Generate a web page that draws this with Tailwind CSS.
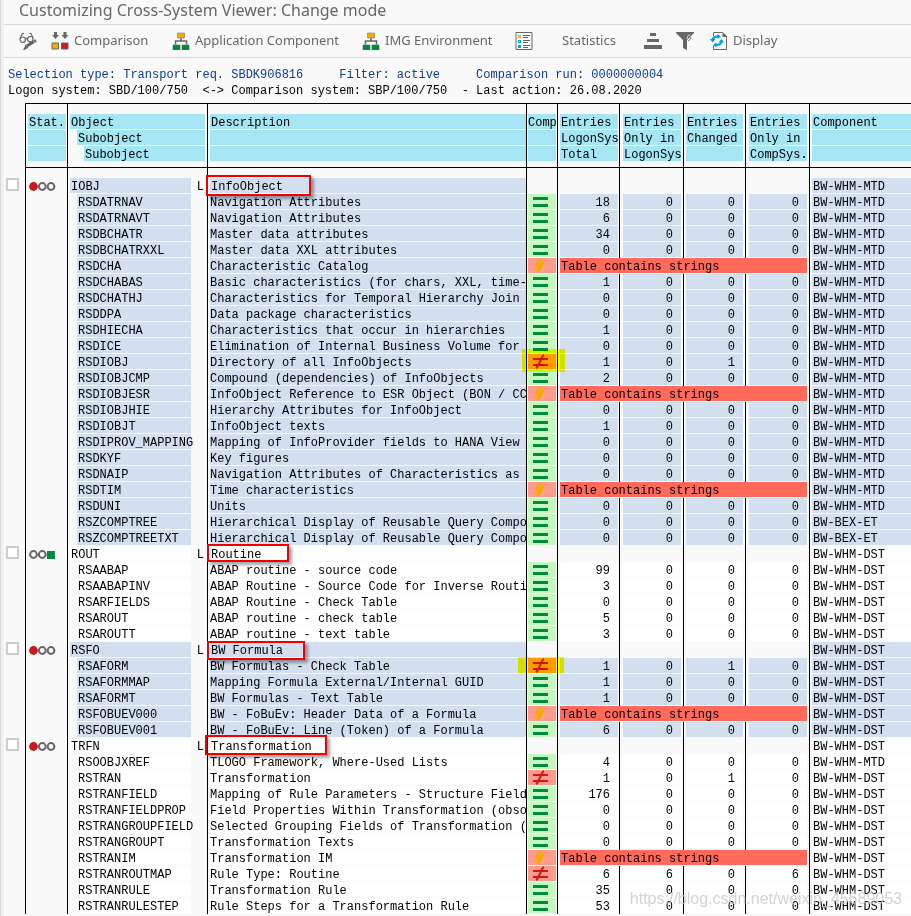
<!DOCTYPE html>
<html lang="en">
<head>
    <meta charset="UTF-8">
    <meta name="viewport" content="width=device-width, initial-scale=1.0">
    <title>Customizing Cross-System Viewer</title>
    <script src="https://cdn.jsdelivr.net/npm/@tailwindcss/browser@4"></script>
</head>
<body class="bg-[#f9f9f9] overflow-hidden">
    <svg class="hidden">
        <symbol id="tree" viewBox="0 0 18 18">
            <path d="M9 6v3M3.500 12.500v-3.500h11v3.500" fill="none" stroke="#666" stroke-width="1.500"/>
            <path d="M5.500 1h7v5h-7z" fill="#f0ab00" stroke="#8a7a4a" stroke-width=".6"/>
            <path d="M1 13h7v5H1zM10 13h7v5h-7z" fill="#008c3c" stroke="#456b52" stroke-width=".6"/>
        </symbol>
        <symbol id="equal" viewBox="0 0 15 15">
            <path d="M0 3h15v3H0zM0 10h15v3H0z" fill="#008c3c"/>
        </symbol>
        <symbol id="differ" viewBox="0 0 15 15">
            <path d="M0 5h15M0 11h15M3 14c3-1 5-12 8-13" fill="none" stroke="#cc1919" stroke-width="2"/>
        </symbol>
        <symbol id="flash" viewBox="0 0 15 15">
            <path d="M5.500 1.500h3.500L6.500 6H8V3.500h2.500V8L6 13.500H2.500L5 9H1.500z" fill="#f0ab00"/>
        </symbol>
        <symbol id="red" viewBox="0 0 27 15">
            <circle cx="4.500" cy="8.500" r="4.400" fill="#cc1919"/>
            <circle cx="13.300" cy="8.500" r="3.400" fill="none" stroke="#666" stroke-width="2"/>
            <circle cx="22" cy="8.500" r="3.400" fill="none" stroke="#666" stroke-width="2"/>
        </symbol>
        <symbol id="green" viewBox="0 0 27 15">
            <circle cx="4.500" cy="8.500" r="3.400" fill="none" stroke="#666" stroke-width="2"/>
            <circle cx="13.300" cy="8.500" r="3.400" fill="none" stroke="#666" stroke-width="2"/>
            <path d="M18 5h8v8h-8z" fill="#008c3c"/>
        </symbol>
    </svg>

    <div class="border-l border-[#d8d8d8]">
    <div class="border-l-3 border-[#f0f0f0]">
        <h1 class="h-[25px] pl-[15px] border-b border-[#d9d9d9] text-[16px] leading-[20px] text-[#666] font-['Noto_Sans',sans-serif] whitespace-nowrap">Customizing Cross-System Viewer: Change mode</h1>

        <div class="h-[33px] pl-[15px] flex items-center border-b border-[#d9d9d9] text-[13px] text-[#666] font-['Noto_Sans',sans-serif] whitespace-nowrap">
            <button aria-label="Display / Change" class="mr-[14px]">
                <svg class="w-[18px] h-[18px]" viewBox="0 0 18 18" fill="none" stroke="#666" stroke-width="1.200">
                    <path d="M1 6.500L3.500 1.500h1.500M14 6L12 1.500h-1.500M6.500 7q1-1 2 0"/>
                    <circle cx="3.700" cy="7.700" r="2.700"/><circle cx="11.300" cy="7.200" r="2.700"/>
                    <path d="M5 17.500l2-4 1.500 2z" fill="#666"/><path d="M8 14l7-4.500" stroke-width="3.200"/><path d="M15.500 9.500l1.500-1" stroke-width="3"/>
                </svg>
            </button>
            <button class="w-[97px] mr-[24px] flex items-center gap-[5px]">
                <svg class="w-[18px] h-[18px] shrink-0" viewBox="0 0 18 18">
                    <path d="M3 0h3v3h2L4.500 7 1 3h2zM12.500 0h3v3h2L14 7l-3.500-4h2z" fill="#666"/>
                    <path d="M1 11h6.500v6H1z" fill="#f0ab00" stroke="#666"/><path d="M10.500 11H17v6h-6.500z" fill="#cc1919" stroke="#666"/>
                </svg>
                Comparison
            </button>
            <button class="w-[166px] mr-[24px] flex items-center gap-[5px]">
                <svg class="w-[18px] h-[18px] shrink-0"><use href="#tree"/></svg>
                Application Component
            </button>
            <button class="w-[130px] mr-[23px] flex items-center gap-[5px]">
                <svg class="w-[18px] h-[18px] shrink-0"><use href="#tree"/></svg>
                IMG Environment
            </button>
            <button aria-label="Legend" class="mr-[29px]">
                <svg class="w-[18px] h-[18px]" viewBox="0 0 18 18">
                    <path d="M1 .5h16v17H1z" fill="#f9f9f9" stroke="#666"/>
                    <path d="M3 3l3 3M6 3L3 6" stroke="#f0ab00" stroke-width="1.200"/>
                    <path d="M3.500 8.500h2v2h-2z" fill="none" stroke="#009de0" stroke-width="1.200"/><path d="M3 13h3v3H3z" fill="#009de0"/>
                    <path d="M8 3.500h7M8 5.500h5M8 8.500h7M8 10.500h5M8 13.500h7M8 15.500h5" stroke="#666"/>
                </svg>
            </button>
            <button class="w-[54px] mr-[28px]">Statistics</button>
            <button aria-label="Sort" class="mr-[14px]">
                <svg class="w-[18px] h-[18px]" viewBox="0 0 18 18" fill="#666"><path d="M6 1h6v3H6zM3 7h12v3H3zM0 13h18v4H0z"/></svg>
            </button>
            <button aria-label="Filter" class="mr-[16px]">
                <svg class="w-[18px] h-[18px]" viewBox="0 0 18 18"><path d="M0 0h18v1l-7 7v10l-4-2V8L0 1z" fill="#666"/><path d="M11 7q0-4 3.500-4.500" fill="none" stroke="#ddd"/><path d="M12 9q3-1 3-4" fill="none" stroke="#777"/></svg>
            </button>
            <button class="flex items-center gap-[5px]">
                <svg class="w-[18px] h-[18px] shrink-0" viewBox="0 0 18 18" fill="none">
                    <path d="M3.500 4V.5h9l4 4v13h-13V14" stroke="#666"/><path d="M12.500 0v5h5z" fill="#666"/>
                    <path d="M2.500 9q0-5 6-4.500M11.500 8.500q0 5-6 4.500" stroke="#009de0" stroke-width="2"/>
                    <path d="M0 7h5.500L2.700 10.500zM8.500 10.500h5.500L11.500 7zM7.500 2l3.500 2.500L7.500 7zM6.500 10.500v5L3 13z" fill="#009de0"/>
                </svg>
                Display
            </button>
        </div>

        <div class="pt-[9px] pl-1 h-[45px] text-[12px] leading-[16px] font-['Liberation_Mono',monospace] text-black">
            <p class="whitespace-pre text-[#0b3d91]">Selection type: Transport req. SBDK906816     Filter: active     Comparison run: 0000000004</p>
            <p class="whitespace-pre">Logon system: SBD/100/750  &lt;-&gt; Comparison system: SBP/100/750  - Last action: 26.08.2020</p>
        </div>
    </div>
    </div>

    <div class="relative border-l border-[#d8d8d8]">
    <div class="border-l-3 border-[#f0f0f0] pb-[3px]">
        <table class="w-full table-fixed border-separate border-spacing-0 text-[12px] leading-[18px] font-['Liberation_Mono',monospace] whitespace-nowrap text-black">
            <colgroup>
                <col class="w-[21px]"><col class="w-[42px]"><col class="w-[140px]"><col class="w-[319px]"><col class="w-[31px]">
                <col class="w-[62px]"><col class="w-[64px]"><col class="w-[62px]"><col class="w-[64px]"><col>
            </colgroup>
            <thead><tr id="head"></tr></thead>
            <tbody id="rows"></tbody>
        </table>
    </div>
    <div class="absolute right-[9px] bottom-[8px] text-[16px] leading-[20px] text-[#c8c8c8]/80 font-['Liberation_Sans',sans-serif] whitespace-nowrap">https://blog.csdn.net/weixin_45689053</div>
    </div>

    <script>
        const heads = [
            ["Stat.", "", ""], ["Object", "Subobject", "Subobject"], ["Description", "", ""], ["Comp", "", ""],
            ["Entries", "LogonSys", "Total"], ["Entries", "Only in", "LogonSys"], ["Entries", "Changed", ""],
            ["Entries", "Only in", "CompSys."], ["Component", "", ""]
        ];
        // padding between the column line and the coloured field
        const pads = ["pl-[2px] pr-px", "pl-[2px] pr-[2px]", "pl-[2px] pr-0", "pl-px pr-px", "pl-[2px] pr-px",
            "pl-[3px] pr-[2px]", "pl-[2px] pr-[2px]", "pl-[3px] pr-[2px]", "pl-[2px]"];
        const line = "border-l border-black";

        // sub rows: name, description, entries ("s" = contains strings), component, highlight
        const M = "BW-WHM-MTD", D = "BW-WHM-DST", B = "BW-BEX-ET";
        const groups = [
            { name: "IOBJ", stat: "red", text: "InfoObject", comp: M, bg: "bg-[#d3dfef]", frame: "-left-[2px] -top-[3px] w-[105px] h-[21px]", subs: [
                ["RSDATRNAV", "Navigation Attributes", [18, 0, 0, 0], M],
                ["RSDATRNAVT", "Navigation Attributes", [6, 0, 0, 0], M],
                ["RSDBCHATR", "Master data attributes", [34, 0, 0, 0], M],
                ["RSDBCHATRXXL", "Master data XXL attributes", [0, 0, 0, 0], M],
                ["RSDCHA", "Characteristic Catalog", "s", M],
                ["RSDCHABAS", "Basic characteristics (for chars, XXL, time-", [1, 0, 0, 0], M],
                ["RSDCHATHJ", "Characteristics for Temporal Hierarchy Join", [0, 0, 0, 0], M],
                ["RSDDPA", "Data package characteristics", [0, 0, 0, 0], M],
                ["RSDHIECHA", "Characteristics that occur in hierarchies", [1, 0, 0, 0], M],
                ["RSDICE", "Elimination of Internal Business Volume for", [0, 0, 0, 0], M],
                ["RSDIOBJ", "Directory of all InfoObjects", [1, 0, 1, 0], M, "-left-[5px] -top-[5px] w-[43px] h-[23px]"],
                ["RSDIOBJCMP", "Compound (dependencies) of InfoObjects", [2, 0, 0, 0], M],
                ["RSDIOBJESR", "InfoObject Reference to ESR Object (BON / CC", "s", M],
                ["RSDIOBJHIE", "Hierarchy Attributes for InfoObject", [0, 0, 0, 0], M],
                ["RSDIOBJT", "InfoObject texts", [1, 0, 0, 0], M],
                ["RSDIPROV_MAPPING", "Mapping of InfoProvider fields to HANA View", [0, 0, 0, 0], M],
                ["RSDKYF", "Key figures", [0, 0, 0, 0], M],
                ["RSDNAIP", "Navigation Attributes of Characteristics as", [0, 0, 0, 0], M],
                ["RSDTIM", "Time characteristics", "s", M],
                ["RSDUNI", "Units", [0, 0, 0, 0], M],
                ["RSZCOMPTREE", "Hierarchical Display of Reusable Query Compo", [0, 0, 0, 0], B],
                ["RSZCOMPTREETXT", "Hierarchical Display of Reusable Query Compo", [0, 0, 0, 0], B]
            ] },
            { name: "ROUT", stat: "green", text: "Routine", comp: D, bg: "bg-white", frame: "-left-px -top-[2px] w-[82px] h-[18px]", subs: [
                ["RSAABAP", "ABAP routine - source code", [99, 0, 0, 0], D],
                ["RSAABAPINV", "ABAP Routine - Source Code for Inverse Routi", [3, 0, 0, 0], D],
                ["RSARFIELDS", "ABAP Routine - Check Table", [0, 0, 0, 0], D],
                ["RSAROUT", "ABAP routine - check table", [5, 0, 0, 0], D],
                ["RSAROUTT", "ABAP routine - text table", [3, 0, 0, 0], D]
            ] },
            { name: "RSFO", stat: "red", text: "BW Formula", comp: D, bg: "bg-[#d3dfef]", frame: "-left-px -top-px w-[98px] h-[19px]", subs: [
                ["RSAFORM", "BW Formulas - Check Table", [1, 0, 1, 0], D, "-left-[9px] -top-px w-[46px] h-[16px]"],
                ["RSAFORMMAP", "Mapping Formula External/Internal GUID", [1, 0, 0, 0], D],
                ["RSAFORMT", "BW Formulas - Text Table", [1, 0, 0, 0], D],
                ["RSFOBUEV000", "BW - FoBuEv: Header Data of a Formula", "s", D],
                ["RSFOBUEV001", "BW - FoBuEv: Line (Token) of a Formula", [6, 0, 0, 0], D]
            ] },
            { name: "TRFN", stat: "red", text: "Transformation", comp: D, bg: "bg-white", frame: "-left-[3px] -top-[3px] w-[122px] h-[20px]", subs: [
                ["RSOOBJXREF", "TLOGO Framework, Where-Used Lists", [4, 0, 0, 0], M],
                ["RSTRAN", "Transformation", [1, 0, 1, 0], D],
                ["RSTRANFIELD", "Mapping of Rule Parameters - Structure Field", [176, 0, 0, 0], D],
                ["RSTRANFIELDPROP", "Field Properties Within Transformation (obso", [0, 0, 0, 0], D],
                ["RSTRANGROUPFIELD", "Selected Grouping Fields of Transformation (", [0, 0, 0, 0], D],
                ["RSTRANGROUPT", "Transformation Texts", [0, 0, 0, 0], D],
                ["RSTRANIM", "Transformation IM", "s", D],
                ["RSTRANROUTMAP", "Rule Type: Routine", [6, 6, 0, 6], D],
                ["RSTRANRULE", "Transformation Rule", [35, 0, 0, 0], D],
                ["RSTRANRULESTEP", "Rule Steps for a Transformation Rule", [53, 0, 0, 0], D]
            ] }
        ];

        document.getElementById("head").innerHTML = `<td></td>` + heads.map((h, i) =>
            `<th class="${line} border-t border-b font-normal text-left align-top pt-[10px] pb-[5px] ${pads[i]}">` +
            h.map((t, n) => `<div class="h-[15px] mb-px bg-[#a6e6f4] ${i == 1 ? ["pl-px", "pl-px ml-[7px]", "pl-px ml-[14px]"][n] : i == 3 ? "" : "pl-px"}">${t}</div>`).join("") +
            `</th>`).join("");

        function field(i, bg, html, extra = "pl-px") {
            return `<td class="${line} p-0 ${pads[i]}"><div class="h-[15px] mb-px ${bg} ${extra}">${html}</div></td>`;
        }

        function objectRow(g) {
            return `<tr>
                <td class="p-0 pl-[2px]"><input type="checkbox" aria-label="${g.name}" class="block appearance-none w-[13px] h-[13px] mb-[3px] border-2 border-[#ccc] bg-white"></td>
                <td class="${line} p-0 pl-[3px]"><svg class="block w-[27px] h-[15px] mb-px" role="img" aria-label="${g.stat}"><use href="#${g.stat}"/></svg></td>
                <td class="${line} p-0 pl-[2px] pr-[3px]"><div class="flex justify-between h-[15px] mb-px"><span class="w-[121px] pl-px ${g.bg}">${g.name}</span><span>L</span></div></td>
                <td class="${line} p-0 ${pads[2]} relative"><div class="h-[15px] mb-px pl-px ${g.bg}">${g.text}</div>
                    <div class="absolute z-10 border-2 border-[#f00000] shadow-[3px_3px_3px_rgba(0,0,0,0.35)] ${g.frame}"></div></td>
                ${`<td class="${line} p-0"></td>`.repeat(5)}
                ${field(8, g.bg, g.comp)}</tr>`;
        }

        function subRow(g, [name, text, n, comp, mark]) {
            const strings = n === "s";
            const icon = strings ? "flash" : n[1] || n[2] || n[3] ? "differ" : "equal";
            const bg = icon === "equal" ? "bg-[#c5f8bf]" : "bg-[#ff9a8d]";
            return `<tr>
                <td class="p-0"></td><td class="${line} p-0"></td>
                <td class="${line} p-0 pl-[9px]"><div class="h-[15px] w-[114px] mb-px pl-px ${g.bg}">${name}</div></td>
                ${field(2, g.bg, text, "pl-0")}
                <td class="${line} p-0 ${pads[3]} relative"><div class="h-[15px] mb-px pl-[5px] ${bg}"><svg class="block w-[15px] h-[15px]" role="img" aria-label="${icon}"><use href="#${icon}"/></svg></div>
                    ${mark ? `<div class="absolute z-10 mix-blend-multiply bg-[#ffff00] ${mark}"></div>` : ""}</td>
                ${strings
                    ? `<td colspan="4" class="${line} p-0 pl-[2px] pr-[2px]"><div class="h-[15px] mb-px pl-px bg-[#ff6a5a]">Table contains strings</div></td>`
                    : n.map((v, i) => field(i + 4, g.bg, v, "text-right pr-[8px]")).join("")}
                ${field(8, g.bg, comp)}</tr>`;
        }

        // blank line under the heading
        const blank = `<tr><td class="h-[10px] p-0"></td>${`<td class="${line} p-0"></td>`.repeat(9)}</tr>`;
        document.getElementById("rows").innerHTML = blank +
            groups.map(g => objectRow(g) + g.subs.map(s => subRow(g, s)).join("")).join("");
    </script>
</body>
</html>
